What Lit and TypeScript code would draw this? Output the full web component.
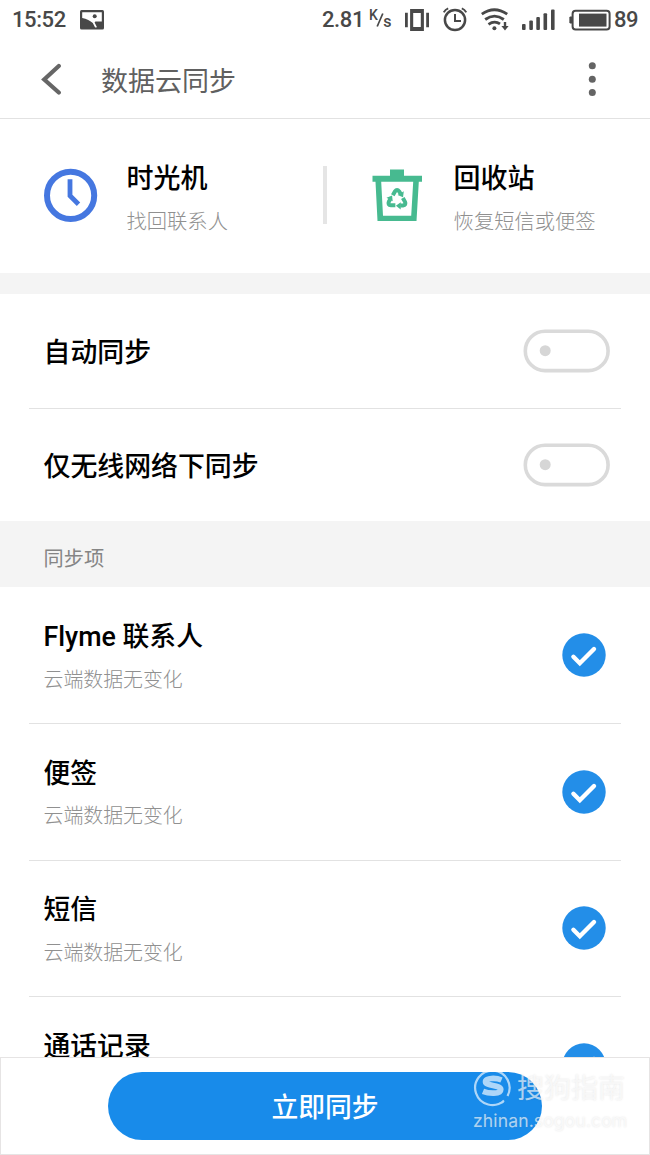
import { LitElement, html, css, svg } from "lit";
import { customElement, property } from "lit/decorators.js";

const fontStack = css`"Roboto", "Noto Sans CJK SC", sans-serif`;

@customElement("status-bar")
class StatusBar extends LitElement {
  static styles = css`
    :host { display: flex; align-items: center; height: 40px; padding: 0 12px 0 12px; box-sizing: border-box;
      font: 500 22px/42px ${fontStack}; color: #484848; }
    .time { width: 68px; letter-spacing: -0.4px; }
    .push { flex: 1; }
    .speed { display: flex; align-items: center; width: 83px; }
    .value { width: 47px; letter-spacing: -0.4px; }
    .unit { display: flex; font-size: 14px; line-height: 16px; }
    .k { padding-bottom: 10px; }
    .s { padding-top: 7px; font-size: 16px; }
    .slash { display: block; width: 8px; height: 20px; margin: 3px -1px 0 -1.5px; }
    .vibrate { margin-right: 14px; }
    .alarm { margin-right: 14px; }
    .wifi { margin-right: 12px; }
    .signal { margin-right: 14px; }
    .battery { margin-right: 3px; }
    svg { display: block; flex: none; }
    .level { width: 24px; letter-spacing: -0.4px; }
  `;
  render() {
    return html`
      <span class="time">15:52</span>
      <svg width="24" height="40" viewBox="0 0 24 40" fill="#484848">
        <rect x="0" y="10" width="24" height="19.5" rx="1.5" />
        <path d="M2.2 12.2h19.6v9.2C19 21.6 17 21.6 15.4 21.4L14.6 22.4l2.4 4.9-1.9.2-2.3-4.4C10.5 21 6.5 18.8 2.2 18z" fill="#fff" />
        <circle cx="14.7" cy="16.2" r="2" />
      </svg>
      <span class="push"></span>
      <span class="speed">
        <span class="value">2.81</span>
        <span class="unit"><span class="k">K</span>
          <svg class="slash" viewBox="0 0 8 20"><path d="M1.2 16.5l5.6-13" stroke="#484848" stroke-width="1.7" /></svg>
          <span class="s">s</span></span>
      </span>
      <svg class="vibrate" width="24" height="40" viewBox="0 0 24 40" fill="#484848">
        <path d="M0 12.8h2.8v14.4H0zM21.2 12.8H24v14.4h-2.8z" />
        <path fill-rule="evenodd" d="M5.1 9h13.8v22H5.1zM8.2 13v14h7.6V13z" />
      </svg>
      <svg class="alarm" width="24" height="40" viewBox="0 0 24 40" fill="none" stroke="#484848" stroke-width="2.5">
        <circle cx="12" cy="20" r="10.1" />
        <path d="M12 14v6.9h6M.8 12.4q1.5-3 4.4-4M23.2 12.4q-1.5-3-4.4-4" stroke-width="2" />
      </svg>
      <svg class="wifi" width="28" height="40" viewBox="0 0 28 40" fill="none" stroke="#484848" stroke-width="2.8">
        <path d="M.8 14.2q12.5-9 25.4 0M4.2 19.5q9.3-6.8 18.6 0M7.5 24.3q6-4.2 11.5-.4" />
        <circle cx="13.4" cy="28.3" r="2" fill="#484848" stroke="none" />
        <path d="M24 22v5" stroke-width="2.4" /><path d="M20.4 26h7.2L24 30.5z" fill="#484848" stroke="none" />
      </svg>
      <svg class="signal" width="34" height="40" viewBox="0 0 34 40" fill="#484848">
        <rect x="1" y="24" width="3.6" height="6" rx="1" /><rect x="8.3" y="20.5" width="3.6" height="9.5" rx="1" />
        <rect x="15.3" y="17" width="3.6" height="13" rx="1" /><rect x="22.5" y="13.3" width="3.6" height="16.7" rx="1" />
        <rect x="30" y="9.5" width="3.6" height="20.5" rx="1" />
      </svg>
      <svg class="battery" width="42" height="40" viewBox="0 0 42 40" fill="none" stroke="#484848" stroke-width="2">
        <rect x="3.6" y="10.8" width="37" height="18.6" rx="3" />
        <path d="M10 13.6h27.5v13H10z" fill="#484848" stroke="none" />
        <path d="M3 17H.9v6H3" fill="#484848" stroke-width="1" />
      </svg>
      <span class="level">89</span>
    `;
  }
}

@customElement("toggle-switch")
class ToggleSwitch extends LitElement {
  static styles = css`
    :host { display: block; }
    svg { display: block; }
  `;
  render() {
    return html`<svg width="87" height="44" viewBox="0 0 87 44">
      <rect x="2.3" y="2.2" width="82.8" height="39.4" rx="19.7" fill="none" stroke="#dadada" stroke-width="3.6" />
      <circle cx="22.2" cy="21.7" r="5.5" fill="#d6d6d6" />
    </svg>`;
  }
}

@customElement("sync-item")
class SyncItem extends LitElement {
  @property() name = "";
  @property() note = "";
  static styles = css`
    :host { display: flex; justify-content: space-between; align-items: flex-start; box-sizing: border-box;
      height: 136.6px; margin: 0 29px; padding: 29.5px 14.7px 0 14.5px; border-bottom: 1px solid #e2e2e2; }
    .name { font-size: 26.8px; line-height: 40px; font-weight: 500; color: #000; }
    .note { margin-top: 8.5px; font-size: 19.9px; line-height: 30px; font-weight: 300; color: #909090; }
    .check { display: block; margin-top: 16px; }
  `;
  render() {
    return html`
      <div><div class="name">${this.name}</div><div class="note">${this.note}</div></div>
      <svg class="check" width="44" height="44" viewBox="0 0 44 44">
        <circle cx="22" cy="22" r="21.7" fill="#238ee8" />
        <path d="M11.4 23.8l6.4 6.4L32 16" fill="none" stroke="#fff" stroke-width="4.4" stroke-linecap="round" />
      </svg>
    `;
  }
}

const recycleArm = svg`
  <path d="M-4.2-4.3L-2-8.1Q0-11 2.2-8.1L3.6-5.8" fill="none" stroke="#47ba90" stroke-width="4" />
  <path d="M6.8-8.2L6-2.2.6-4.6z" fill="#47ba90" />
`;

@customElement("app-root")
class AppRoot extends LitElement {
  static styles = css`
    :host { display: flex; flex-direction: column; position: relative; width: 650px; height: 1155px; overflow: hidden;
      background: #fff; font-family: ${fontStack}; color: #000; }
    svg { display: block; }
    .header { display: flex; align-items: center; height: 79px; box-sizing: border-box; flex: none;
      border-bottom: 1.5px solid #e2e2e2; padding: 0 52px 0 40px; }
    .header h1 { flex: 1; margin: 0 0 0 39px; padding-top: 5px; font-size: 27px; line-height: 40px; font-weight: 400; color: #606060; }
    .shortcuts { display: flex; flex: none; height: 153.5px; box-sizing: border-box; padding: 39px 0 0 44px; }
    .shortcut { display: flex; }
    .machine { width: 279px; }
    .bin { padding-left: 45px; }
    .shortcut svg { margin-top: 9px; }
    .machine .label { margin-left: 28.5px; }
    .bin .label { margin-left: 30.6px; }
    .title { margin-top: 1px; font-size: 27px; line-height: 40px; font-weight: 500; }
    .hint { margin-top: 8px; font-size: 20.3px; line-height: 30px; font-weight: 300; color: #909090; }
    .divider { width: 4px; height: 58px; margin-top: 8px; background: #e5e5e5; }
    .band { flex: none; height: 21.5px; background: #f4f4f4; }
    .setting { display: flex; flex: none; align-items: center; justify-content: space-between; height: 112px;
      box-sizing: border-box; margin: 0 29px; padding: 0 11px 0 14.5px; font-size: 26.9px; line-height: 40px; font-weight: 500; }
    .setting span { padding-top: 3.5px; }
    .setting toggle-switch { padding-bottom: 0.5px; }
    .ruled { border-bottom: 1px solid #e2e2e2; height: 115px; }
    .section { flex: none; height: 65.5px; padding: 7.5px 0 0 43.5px; box-sizing: border-box; background: #f4f4f4;
      font-size: 20.2px; line-height: 61px; color: #858585; }
    .list { flex: 1; min-height: 0; padding-top: 1px; overflow: hidden; }
    .footer { display: flex; flex: none; justify-content: center; box-sizing: border-box; height: 98px;
      border: 1.5px solid #e6e4e4; padding-top: 14px; background: #fff; }
    .sync { width: 434px; height: 68px; box-sizing: border-box; border: 0; border-radius: 34px; background: #188bea;
      color: #fff; padding: 4px 0 0; font: 500 26.8px/64px ${fontStack}; }
    .watermark { position: absolute; left: 473px; top: 1065px; width: 170px; color: rgba(255, 255, 255, 0.65);
      text-shadow: 0 0 2px rgba(120, 120, 120, 0.2); }
    .brand { display: flex; align-items: center; gap: 5px; height: 43px; font-size: 27px; line-height: 42px; font-weight: 400; white-space: nowrap; }
    .brand span { padding-top: 4px; }
    .site { padding-top: 1px; font: 400 17.6px/24px Inter, sans-serif; letter-spacing: 0.1px; white-space: nowrap; }
  `;
  render() {
    return html`
      <status-bar></status-bar>
      <header class="header">
        <svg width="22" height="32" viewBox="0 0 22 32">
          <path d="M18.8 3L4.2 16.5l14.6 13" fill="none" stroke="#666" stroke-width="4.2" stroke-linecap="round" />
        </svg>
        <h1>数据云同步</h1>
        <svg width="12" height="36" viewBox="0 0 12 36" fill="#646464">
          <circle cx="6.3" cy="4.8" r="3.5" /><circle cx="6.3" cy="18.2" r="3.5" /><circle cx="6.3" cy="31.5" r="3.5" />
        </svg>
      </header>
      <section class="shortcuts">
        <div class="shortcut machine">
          <svg width="54" height="56" viewBox="0 0 54 56" fill="none" stroke="#4577e0">
            <circle cx="26.6" cy="28.4" r="23.6" stroke-width="6" />
            <path d="M26 12.2v16.6l8.5 8.5" stroke-width="4.8" />
          </svg>
          <div class="label"><div class="title">时光机</div><div class="hint">找回联系人</div></div>
        </div>
        <div class="divider"></div>
        <div class="shortcut bin">
          <svg width="51" height="56" viewBox="0 0 51 56">
            <path fill="#47ba90" fill-rule="evenodd" d="M18 2.5h14v6.3h18v6h-3.2L44.5 54h-39L3.5 14.8H.5v-6H18zM9.2 14.8L11 48.8h28.2l2-34z" />
            <g transform="translate(25 32.5)">
              ${[0, 120, 240].map((a) => svg`<g transform="rotate(${a})">${recycleArm}</g>`)}
            </g>
          </svg>
          <div class="label"><div class="title">回收站</div><div class="hint">恢复短信或便签</div></div>
        </div>
      </section>
      <div class="band"></div>
      <div class="setting ruled"><span>自动同步</span><toggle-switch></toggle-switch></div>
      <div class="setting"><span>仅无线网络下同步</span><toggle-switch></toggle-switch></div>
      <div class="section">同步项</div>
      <div class="list">
        ${["Flyme 联系人", "便签", "短信", "通话记录"].map(
          (name) => html`<sync-item name=${name} note="云端数据无变化"></sync-item>`
        )}
      </div>
      <footer class="footer"><button class="sync">立即同步</button></footer>
      <div class="watermark">
        <div class="brand">
          <svg width="39" height="40" viewBox="0 0 39 40" fill="none" stroke="#fff" stroke-opacity=".65">
            <path d="M31 33.5A17.2 17.2 0 1 1 34.5 29M26 36.7l4.5-2" stroke-width="2.2" />
            <path d="M28.5 13c-5-2.2-16.5-2.5-16 1.9.4 4.4 15.3 2.8 15.3 7.6 0 5-12.3 4.1-17.8 1.8" stroke-width="5.6" />
          </svg>
          <span>搜狗指南</span>
        </div>
        <div class="site">zhinan.sogou.com</div>
      </div>
    `;
  }
}
